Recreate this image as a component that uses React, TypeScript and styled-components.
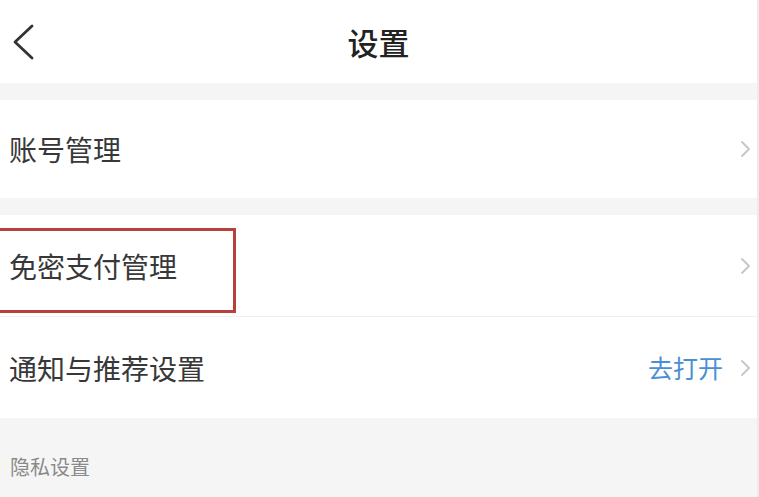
import styled, { createGlobalStyle } from "styled-components";

const GlobalStyle = createGlobalStyle`
  html, body {
    margin: 0;
    padding: 0;
    background: #f5f5f5;
  }
  body {
    font-family: "Noto Sans CJK SC", "Noto Sans", sans-serif;
    color: #333;
  }
`;

const Page = styled.div`
  display: flex;
  flex-direction: column;
  height: 100vh;
  background: #f5f5f5;
  border-right: 2px solid #ececec;
  box-sizing: border-box;
  overflow: hidden;
`;

const Header = styled.header`
  height: 83px;
  flex-shrink: 0;
  background: #fff;
  display: grid;
  grid-template-columns: 1fr auto 1fr;
  align-items: center;
`;

const BackBtn = styled.button`
  justify-self: start;
  border: none;
  background: transparent;
  padding: 0 0 0 12px;
  height: 40px;
  display: flex;
  align-items: center;
  cursor: pointer;
`;

const Title = styled.h1`
  margin: 0;
  font-size: 31px;
  font-weight: 500;
  color: #222;
  line-height: 1;
`;

const Group = styled.section`
  margin-top: 17px;
  background: #fff;
  display: flex;
  flex-direction: column;
`;

const Row = styled.div<{ $height: number; $divider?: boolean }>`
  position: relative;
  height: ${(p) => p.$height}px;
  display: flex;
  align-items: center;
  padding: 0 6px 0 9px;
  border-bottom: ${(p) => (p.$divider ? "1px solid #efefef" : "none")};
  box-sizing: border-box;
`;

const Label = styled.span`
  flex: 1;
  font-size: 28px;
  line-height: 1;
  color: #383838;
`;

const Action = styled.span`
  font-size: 25px;
  line-height: 1;
  color: #4a8fd4;
  margin-right: 16px;
`;

const Highlight = styled.div`
  position: absolute;
  left: -4px;
  top: 13px;
  width: 240px;
  height: 85px;
  border: 3px solid #b9403a;
  box-sizing: border-box;
  pointer-events: none;
`;

const SectionTitle = styled.div`
  padding: 39px 0 0 10px;
  font-size: 20px;
  line-height: 1;
  color: #8a8a8a;
`;

function BackIcon() {
  return (
    <svg width="24" height="36" viewBox="0 0 24 36">
      <polyline
        points="20,2 3,18 20,34"
        fill="none"
        stroke="#333"
        strokeWidth="2.8"
        strokeLinecap="round"
        strokeLinejoin="round"
      />
    </svg>
  );
}

function Chevron() {
  return (
    <svg width="12" height="20" viewBox="0 0 12 20">
      <polyline
        points="3,3 10,10 3,17"
        fill="none"
        stroke="#c6c6c6"
        strokeWidth="1.8"
        strokeLinecap="round"
        strokeLinejoin="round"
      />
    </svg>
  );
}

export default function App() {
  return (
    <>
      <GlobalStyle />
      <Page>
        <Header>
          <BackBtn aria-label="返回">
            <BackIcon />
          </BackBtn>
          <Title>设置</Title>
          <span />
        </Header>

        <Group>
          <Row $height={98}>
            <Label>账号管理</Label>
            <Chevron />
          </Row>
        </Group>

        <Group>
          <Row $height={102} $divider>
            <Label>免密支付管理</Label>
            <Chevron />
            <Highlight />
          </Row>
          <Row $height={101}>
            <Label>通知与推荐设置</Label>
            <Action>去打开</Action>
            <Chevron />
          </Row>
        </Group>

        <SectionTitle>隐私设置</SectionTitle>
      </Page>
    </>
  );
}
